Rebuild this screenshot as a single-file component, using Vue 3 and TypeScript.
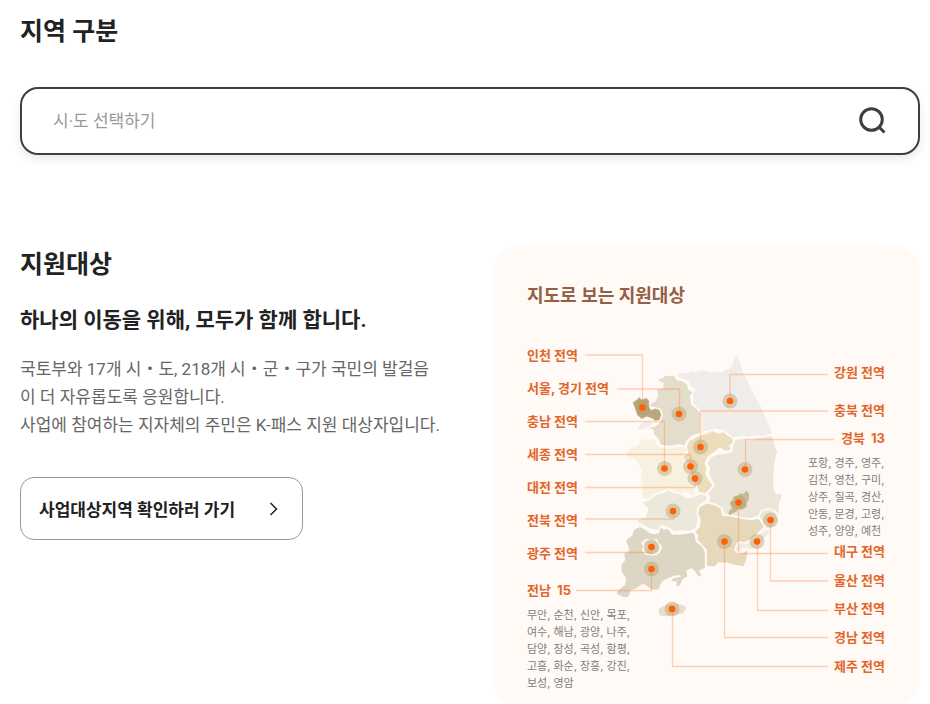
<script setup lang="ts">
import { ref } from 'vue'

interface Region {
  name: string
  fill: string
  points: string
}

interface Label {
  text: string
  y: number
  side: 'left' | 'right'
  line: string
  pin: [number, number]
}

const keyword = ref('')

// Region outlines, drawn at three times the map's size
const regions: Region[] = [
  { name: 'gangwon', fill: '#f0ece9', points: '228,103 238,97 248,97 265,94 270,88 285,95 297,89 310,88 330,94 350,91 362,97 378,88 390,82 398,66 404,48 410,42 418,55 424,72 430,92 440,115 455,145 470,175 488,205 500,235 512,260 518,284 505,285 490,293 470,288 440,293 425,290 400,295 385,285 370,272 345,268 325,273 305,278 303,215 285,200 275,190 280,175 275,160 285,150 270,140 265,125 250,118 235,115' },
  { name: 'gyeonggi', fill: '#e5ddcb', points: '173,117 190,110 195,104 205,106 222,104 232,118 250,122 262,132 268,148 280,155 272,170 276,192 295,208 303,220 302,280 275,290 262,302 255,318 235,315 210,320 180,316 172,295 160,285 158,270 145,268 150,260 165,257 180,245 183,215 165,205 150,200 148,190 165,182 172,168 168,148 188,142 188,130 175,125' },
  { name: 'incheon', fill: '#baa780', points: '95,187 108,178 118,168 125,176 140,171 150,183 148,200 155,208 165,203 180,208 186,225 180,242 165,245 155,237 140,232 125,240 110,227 103,205' },
  { name: 'daebu', fill: '#f0ece9', points: '111,264 120,250 130,246 145,242 165,248 147,262 130,270 118,272' },
  { name: 'chungnam', fill: '#f8f1e0', points: '80,335 95,320 112,316 120,300 135,294 150,298 160,290 172,312 185,322 215,322 240,318 258,320 262,335 250,348 248,362 262,372 265,395 275,410 270,430 280,445 290,460 275,470 260,458 240,462 225,460 205,445 190,455 170,467 140,482 123,470 126,440 120,420 123,390 112,368 95,355 90,367 80,352' },
  { name: 'chungbuk', fill: '#ecdebd', points: '258,320 265,302 285,292 305,283 330,275 335,270 355,278 372,274 385,286 400,295 400,310 390,318 395,332 375,335 360,325 340,340 325,350 316,370 322,385 318,400 328,420 340,435 330,450 318,462 295,458 288,435 280,420 270,400 262,370 247,356 250,346 262,338' },
  { name: 'gyeongbuk', fill: '#ece6da', points: '402,298 425,293 450,298 475,292 500,288 517,286 522,300 527,320 534,335 527,360 524,390 522,420 524,450 530,460 547,458 545,480 539,490 539,522 525,525 510,508 490,510 478,530 450,537 430,535 400,528 370,525 368,510 350,498 325,490 328,470 320,460 340,440 340,430 325,405 328,385 320,370 330,352 355,340 380,338 395,334 395,318 402,308' },
  { name: 'jeonbuk', fill: '#ede8dc', points: '120,485 145,480 165,463 185,458 200,452 207,443 215,455 235,458 260,472 275,470 290,465 305,460 322,468 320,483 300,495 292,510 295,540 290,565 270,575 245,573 225,578 205,565 190,558 175,573 150,568 130,557 108,545 113,539 135,530 143,510 135,497' },
  { name: 'jeonnam', fill: '#ded6c4', points: '75,600 95,585 100,568 120,558 135,566 150,577 165,580 175,577 182,558 192,567 205,564 218,582 250,580 275,576 285,580 290,605 310,618 317,640 317,685 300,693 307,707 295,714 285,697 275,687 262,692 264,710 250,720 238,743 226,737 228,727 210,724 218,712 240,708 225,709 205,717 187,727 177,751 155,751 130,734 110,747 95,752 87,772 70,775 48,762 50,752 73,733 76,715 63,698 61,675 73,660 70,640 86,630' },
  { name: 'gyeongnam', fill: '#e5d8bb', points: '297,500 320,488 345,493 365,505 368,525 395,527 430,535 455,538 475,534 485,545 495,560 480,575 465,590 445,605 430,610 415,612 405,630 420,640 440,630 445,630 442,657 432,682 405,677 380,670 355,670 345,682 318,679 318,630 305,615 290,600 292,585 282,575 297,560 300,540 292,520' },
  { name: 'busan', fill: '#f0ebe2', points: '405,629 410,613 420,606 440,610 460,595 480,580 500,563 513,567 505,585 490,600 480,620 455,630 430,625 415,640' },
  { name: 'ulsan', fill: '#ece6da', points: '475,530 485,512 510,506 530,518 535,540 520,562 500,568 485,545' },
  { name: 'jeju', fill: '#e8e0ca', points: '171,808 185,798 205,790 230,788 252,793 261,805 252,822 225,827 200,831 178,829' },
]

const daegu = '385,522 387,512 396,506 390,492 392,484 402,484 402,470 415,468 420,460 432,461 438,452 446,458 447,478 440,488 440,502 425,508 415,505 409,515 398,520 390,525'
const gwangju = '126,608 140,598 150,602 170,600 172,608 184,620 176,638 160,645 138,642 128,630 133,620'

const labels: Label[] = [
  { text: '인천 전역', y: 360, side: 'left', line: 'M585 355H642.5V407', pin: [642.5, 407.5] },
  { text: '서울, 경기 전역', y: 393, side: 'left', line: 'M617 389H679.5V414', pin: [679, 414] },
  { text: '충남 전역', y: 426, side: 'left', line: 'M585 421.5H664.5V468', pin: [664.5, 468.5] },
  { text: '세종 전역', y: 459, side: 'left', line: 'M585 454.5H690.5V466', pin: [690.5, 466.5] },
  { text: '대전 전역', y: 492, side: 'left', line: 'M585 487.5H695V478', pin: [695, 478.5] },
  { text: '전북 전역', y: 525, side: 'left', line: 'M585 519H673.5V511', pin: [673, 511] },
  { text: '광주 전역', y: 558, side: 'left', line: 'M585 552.5H651.5V547', pin: [651.5, 547] },
  { text: '전남\u00a0 15', y: 595, side: 'left', line: 'M576 590.5H651.5V569', pin: [651.5, 569] },
  { text: '강원 전역', y: 377, side: 'right', line: 'M828 374.5H730V401', pin: [730, 401] },
  { text: '충북 전역', y: 415, side: 'right', line: 'M828 411H700.5V447', pin: [700.5, 447] },
  { text: '경북\u00a0 13', y: 443, side: 'right', line: 'M834 439.5H745.5V469', pin: [745, 469.5] },
  { text: '대구 전역', y: 556, side: 'right', line: 'M828 553.5H738.5V502', pin: [738.5, 502.5] },
  { text: '울산 전역', y: 585, side: 'right', line: 'M828 581H770.5V520', pin: [770.5, 520] },
  { text: '부산 전역', y: 613, side: 'right', line: 'M828 610.5H757.5V541', pin: [757, 541.5] },
  { text: '경남 전역', y: 642, side: 'right', line: 'M828 637.5H724.5V541', pin: [724.5, 541.5] },
  { text: '제주 전역', y: 671, side: 'right', line: 'M828 666.5H672.5V609', pin: [672, 609] },
]

const jeonnamTowns = ['무안, 순천, 신안, 목포,', '여수, 해남, 광양, 나주,', '담양, 장성, 곡성, 함평,', '고흥, 화순, 장흥, 강진,', '보성, 영암']
const gyeongbukTowns = ['포항, 경주, 영주,', '김천, 영천, 구미,', '상주, 칠곡, 경산,', '안동, 문경, 고령,', '성주, 양양, 예천']
</script>

<template>
  <main class="page">
    <h2 class="title">지역 구분</h2>

    <form class="search" role="search" @submit.prevent>
      <input v-model="keyword" class="search-input" type="text" placeholder="시·도 선택하기" aria-label="시·도 선택하기" />
      <button class="search-button" type="submit" aria-label="검색">
        <svg viewBox="0 0 32 32" width="32" height="32" fill="none" stroke="#3f3f3f" stroke-width="3">
          <circle cx="15.5" cy="14.5" r="10.8" />
          <path d="M23 22L28.5 27.5" />
        </svg>
      </button>
    </form>

    <div class="columns">
      <section class="intro">
        <h2 class="title">지원대상</h2>
        <h3 class="subtitle">하나의 이동을 위해, 모두가 함께 합니다.</h3>
        <p class="body">
          국토부와 17개 시・도, 218개 시・군・구가 국민의 발걸음이 더 자유롭도록 응원합니다.<br />
          사업에 참여하는 지자체의 주민은 K-패스 지원 대상자입니다.
        </p>
        <a class="more" href="#">
          사업대상지역 확인하러 가기
          <svg viewBox="0 0 12 16" width="12" height="16" fill="none" stroke="#222" stroke-width="1.5">
            <path d="M2.5 2L8.5 8L2.5 14" />
          </svg>
        </a>
      </section>

      <section class="card">
        <h3 class="card-title">지도로 보는 지원대상</h3>
        <svg class="map" viewBox="527 345 358 352">
          <g transform="translate(600 340) scale(0.33333)" stroke="#fffaf6" stroke-width="5" stroke-linejoin="round">
            <polygon v-for="r in regions" :key="r.name" :points="r.points" :fill="r.fill" />
            <polygon :points="daegu" fill="#c8b996" stroke="none" />
            <polygon :points="gwangju" fill="#ede6da" />
          </g>
          <circle v-for="l in labels" :key="l.text" class="halo" :cx="l.pin[0]" :cy="l.pin[1]" r="7.5" />
          <path v-for="l in labels" :key="l.text" class="lead" :d="l.line" />
          <circle v-for="l in labels" :key="l.text" class="dot" :cx="l.pin[0]" :cy="l.pin[1]" r="3.3" />
          <text v-for="l in labels" :key="l.text" class="label" :class="l.side" :x="l.side === 'left' ? 527 : 885" :y="l.y">{{ l.text }}</text>
          <text class="towns">
            <tspan v-for="(t, i) in jeonnamTowns" :key="t" x="527" :y="619 + i * 17">{{ t }}</tspan>
          </text>
          <text class="towns">
            <tspan v-for="(t, i) in gyeongbukTowns" :key="t" x="808" :y="467 + i * 17">{{ t }}</tspan>
          </text>
        </svg>
      </section>
    </div>
  </main>
</template>

<style>
body {
  margin: 0;
  background: #fff;
}
</style>

<style scoped>
.page {
  padding: 14px 10px 0 20px;
  font-family: Roboto, "Noto Sans CJK KR", sans-serif;
  color: #222;
}

.title {
  margin: 0;
  font-size: 25px;
  line-height: 36px;
  font-weight: 700;
}

.search {
  display: flex;
  align-items: center;
  box-sizing: border-box;
  height: 68px;
  margin-top: 37px;
  padding: 0 30px 0 31px;
  border: 2px solid #3f3f3f;
  border-radius: 18px;
  box-shadow: 0 4px 8px rgba(60, 40, 50, 0.1);
}

.search-input {
  flex: 1;
  min-width: 0;
  padding: 0;
  border: 0;
  outline: 0;
  background: transparent;
  font-family: inherit;
  font-size: 17px;
  line-height: 28px;
  color: #222;
}

.search-input::placeholder {
  color: #999;
  opacity: 1;
}

.search-button {
  display: flex;
  padding: 0;
  border: 0;
  background: transparent;
  cursor: pointer;
}

.columns {
  display: grid;
  grid-template-columns: 1fr 1fr;
  align-items: start;
  gap: 44px;
  margin-top: 90px;
}

.intro {
  padding: 2px 4px 0 0;
}

.subtitle {
  margin: 22px 0 0;
  font-size: 21px;
  line-height: 30px;
  font-weight: 700;
}

.body {
  margin: 20px 0 0;
  font-size: 17px;
  line-height: 28px;
  color: #666;
}

.more {
  display: flex;
  align-items: center;
  gap: 33px;
  box-sizing: border-box;
  width: fit-content;
  height: 63px;
  margin-top: 38px;
  padding: 0 22px 0 18px;
  border: 1px solid #999;
  border-radius: 14px;
  color: #222;
  font-size: 17px;
  font-weight: 700;
  text-decoration: none;
}

.card {
  padding: 37px 35px 10px;
  border-radius: 28px;
  background: #fffaf6;
}

.card-title {
  margin: 0;
  font-size: 18px;
  line-height: 28px;
  font-weight: 700;
  color: #955f43;
}

.map {
  display: block;
  width: 100%;
  margin-top: 35px;
}

.halo {
  fill: #b59a66;
  fill-opacity: 0.42;
}

.lead {
  fill: none;
  stroke: #ff7a30;
  stroke-opacity: 0.34;
  stroke-width: 1.3;
}

.dot {
  fill: #ff5f05;
}

.label {
  font-family: Inter, "Noto Sans CJK KR", sans-serif;
  font-size: 13px;
  font-weight: 700;
  fill: #e2662a;
}

.label.right {
  text-anchor: end;
}

.towns {
  font-family: Inter, "Noto Sans CJK KR", sans-serif;
  font-size: 11px;
  fill: #808080;
}
</style>
